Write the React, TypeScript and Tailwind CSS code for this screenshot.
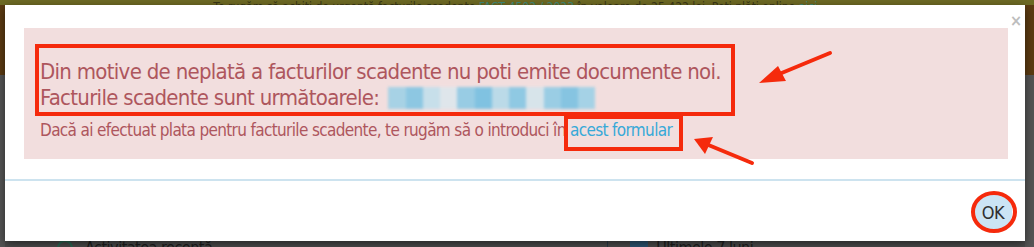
import React from 'react';

const font = { fontFamily: '"DejaVu Sans Condensed", "Liberation Sans", sans-serif' };

function Blurred() {
  // pixelated / blurred invoice numbers
  const cells = [
    'bg-[#8fcfe8]', 'bg-[#6cc0e4]', 'bg-[#b9e0ef]', 'bg-[#d9e9f0]', 'bg-[#7ac6e6]', 'bg-[#5bb9e2]',
    'bg-[#a9d9ec]', 'bg-[#6fc2e5]', 'bg-[#cfe6ef]', 'bg-[#7dc8e7]', 'bg-[#62bce3]', 'bg-[#8ccfe9]',
  ];
  return (
    <span className="inline-flex h-[22px] w-[207px] align-[-4px] ml-[9px] blur-[1.5px] opacity-75">
      {cells.map((c, i) => (
        <span key={i} className={`flex-1 ${c}`} />
      ))}
    </span>
  );
}

function Annotations() {
  return (
    <svg className="absolute inset-0 pointer-events-none" width="1034" height="247" viewBox="0 0 1034 247">
      <g stroke="#f52a0c" fill="none" strokeWidth="4">
        <rect x="37" y="46" width="696" height="68" />
        <rect x="566" y="117" width="115" height="32" />
        <ellipse cx="994" cy="212" rx="21" ry="19" />
      </g>
      <g stroke="#f52a0c" strokeWidth="4" strokeLinecap="round">
        <line x1="830" y1="53" x2="772" y2="77" />
        <line x1="752" y1="163" x2="706" y2="144" />
      </g>
      <g fill="#f52a0c">
        <polygon points="759,83 778,66 786,81" />
        <polygon points="694,139 713,137 705,154" />
      </g>
    </svg>
  );
}

export default function App() {
  return (
    <div className="relative w-[1034px] h-[247px] overflow-hidden bg-[#4d4d4d]" style={font}>
      {/* page behind the overlay */}
      <div className="h-[5px] bg-[#6e6a24] flex justify-center items-end overflow-hidden">
        <span className="text-[12px] leading-[12px] text-[#3a3716] whitespace-nowrap translate-y-[8px]">
          Te rugăm să achiți de urgență facturile scadente <span className="text-[#3f8a7a]">FACT 4502 / 2023</span> în valoare de 25 422 lei. Poți plăti online <span className="text-[#3f8a7a]">aici</span>.
        </span>
      </div>
      <div className="flex justify-between h-[242px]">
        <div className="w-[5px] flex flex-col">
          <div className="h-[70px] bg-[#5c3b12]" />
          <div className="flex-1 bg-[#555]" />
        </div>
        <div className="w-[9px] flex flex-col">
          <div className="h-[70px] bg-[#5c3b12]" />
          <div className="flex-1 bg-[#555]" />
        </div>
      </div>
      <div className="absolute left-0 right-0 bottom-0 h-[6px] flex items-start text-[#1f1f1f] text-[16px] leading-[16px] tracking-[-0.5px] overflow-hidden">
        <span className="ml-[57px] w-[16px] h-[16px] rounded-full border-2 border-[#2b6b55] -mt-[1px]" />
        <span className="ml-[12px] -mt-[1px]">Activitatea recentă</span>
        <span className="ml-[395px] w-px h-[6px] bg-[#2a3b4a]" />
        <span className="ml-[22px] w-[18px] h-[6px] bg-[#2c5674]" />
        <span className="ml-[8px] -mt-[1px]">Ultimele 7 luni</span>
      </div>

      {/* modal */}
      <div className="absolute left-[5px] top-[5px] w-[1020px] h-[236px] bg-white shadow-[0_3px_9px_rgba(0,0,0,0.5)] flex flex-col">
        <button className="absolute right-[3px] top-[8px] text-[16px] leading-[16px] text-[#bdbdbd] font-bold">×</button>
        <div className="pl-[19px] pr-[17px] pt-[23px]">
          <div className="h-[131px] bg-[#f2dede] pl-[16px] pt-[31px] text-[#ae565d]">
            <div className="text-[22px] leading-[26px] tracking-[-0.7px]">
              Din motive de neplată a facturilor scadente nu poti emite documente noi.
              <br />
              Facturile scadente sunt următoarele:
              <Blurred />
            </div>
            <div className="mt-[8px] text-[17px] leading-[22px] tracking-[-0.65px]">
              Dacă ai efectuat plata pentru facturile scadente, te rugăm să o introduci în{' '}
              <a className="text-[#37a9d8]">acest formular</a>
            </div>
          </div>
        </div>
        <div className="mt-[20px] border-t-2 border-[#cde3ef] flex-1 flex justify-end items-start pr-[13px] pt-[13px]">
          <button className="w-[38px] h-[36px] rounded-[16px] bg-[#cbe4f4] text-[#2f2f2f] text-[18px] leading-[18px] tracking-[-0.5px] pt-[1px]">
            OK
          </button>
        </div>
      </div>

      <Annotations />
    </div>
  );
}
